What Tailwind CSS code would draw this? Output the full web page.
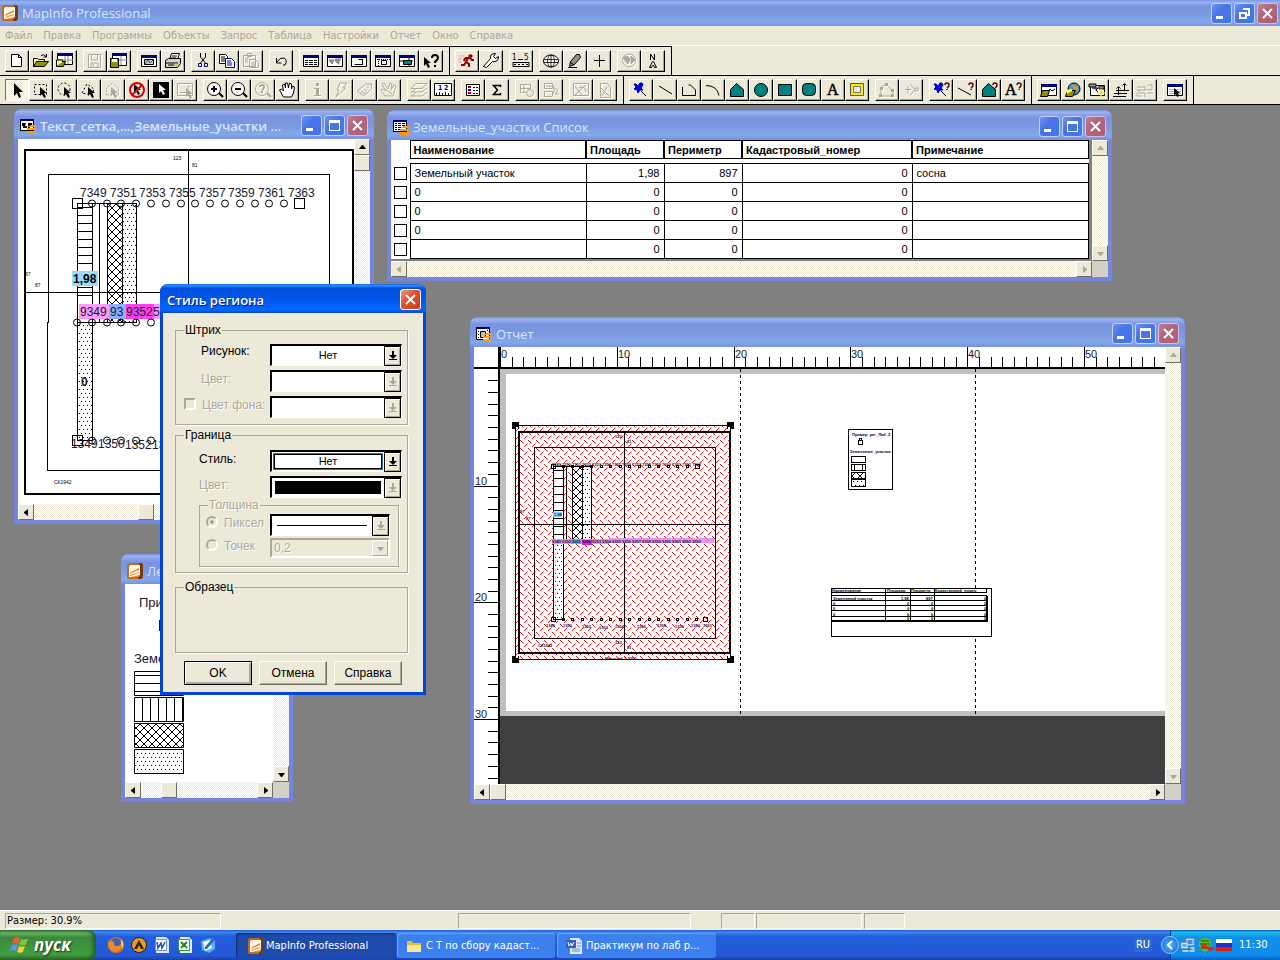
<!DOCTYPE html>
<html lang="ru">
<head>
    <meta charset="UTF-8">
    <meta name="viewport" content="width=device-width, initial-scale=1.0">
    <title>MapInfo Professional</title>
    <script src="https://cdn.jsdelivr.net/npm/@tailwindcss/browser@4"></script>
</head>
<body class="h-screen flex flex-col overflow-hidden bg-[#808080] text-black text-[11px] leading-[14px] font-['DejaVu_Sans_Condensed','DejaVu_Sans',sans-serif]">

    <!-- shared symbols and fill patterns -->
    <svg class="absolute w-0 h-0" aria-hidden="true">
        <defs>
            <symbol id="logo" viewBox="0 0 16 16">
                <path d="M3 0h11q2 0 2 2v11q0 3-3 3H2q-2 0-2-2V3q0-3 3-3z" fill="#c4691c"/>
                <path d="M12 0h2q2 0 2 2v11q0 3-3 3h-2z" fill="#7a3a10"/>
                <path d="M4 2h9v8q0 4-3 4H2V4q0-2 2-2z" fill="#fff8ee"/>
                <path d="M4 9l8-4v2l-9 4zM3 12l9-3v1l-9 3zM4 14l8-2v2z" fill="#ee8a2c"/>
            </symbol>
            <symbol id="stripes" viewBox="0 0 16 16">
                <path d="M9 8l2-1h5v2H8zM7 10h9v2H7zM7 13h9v3H7z" fill="#ff9a10"/>
            </symbol>
            <pattern id="hlines" width="8" height="8" patternUnits="userSpaceOnUse"><path d="M0 3.500h8" stroke="#000"/></pattern>
            <pattern id="vlines" width="8" height="8" patternUnits="userSpaceOnUse"><path d="M6.500 0v8" stroke="#000"/></pattern>
            <pattern id="cross" width="8" height="8" patternUnits="userSpaceOnUse"><path d="M0 0l8 8M8 0l-8 8" stroke="#000"/></pattern>
            <pattern id="dots" width="4" height="8" patternUnits="userSpaceOnUse"><path d="M1 1h1v1h-1zM3 5h1v1h-1z"/></pattern>
            <pattern id="weave" width="8" height="8" patternUnits="userSpaceOnUse">
                <path d="M0 0h1v1h-1zM1 1h1v1h-1zM2 2h1v1h-1zM4 6h1v1h-1zM5 5h1v1h-1zM6 4h1v1h-1z" fill="#d81818"/>
                <path d="M3 3h1v1h-1zM7 3h1v1h-1z" fill="#40e0e0"/>
            </pattern>
        </defs>
    </svg>

    <header class="bg-[#ece9d8]">
        <div class="h-[26px] flex items-center gap-1 pl-[2px] pr-[2px] bg-[linear-gradient(#7697e7_0,#9ab2f2_8%,#7a94df_25%,#7b96e0_50%,#83a8ea_85%,#7b8ee0_100%)]">
            <svg class="w-4 h-4"><use href="#logo"/></svg>
            <h1 class="flex-1 text-[13px] font-medium text-[#d8e4f8] font-['Open_Sans',sans-serif]">MapInfo Professional</h1>
            <div data-controls="restore" class="flex gap-[2px]"></div>
        </div>
        <nav id="menu" class="h-[20px] flex items-center gap-[11px] pl-[5px] text-[#aca899] border-b border-white"></nav>
        <div id="row1" class="flex w-max border-t border-r border-black"></div>
        <div class="border-y border-black"><div id="row2" class="flex w-max border-r border-black"></div></div>
    </header>

    <main class="relative flex-1 overflow-hidden">

        <!-- map -->
        <section class="absolute left-[14px] top-[4px] w-[360px] h-[415px] flex flex-col rounded-t-lg border-x-4 border-b-4 border-[#7385dd] bg-[#7b8ee0]">
            <div class="-mx-1 h-[30px] shrink-0 flex items-center gap-1 pl-[6px] pr-[6px] pt-[3px] rounded-t-lg bg-[linear-gradient(#7697e7_0,#9ab2f2_8%,#7a94df_25%,#7b96e0_50%,#83a8ea_85%,#7b8ee0_100%)]">
                <svg class="w-4 h-4"><path d="M0 1h14v12H0z"/><path d="M1 3h12v9H1z" fill="#fff"/><path d="M0 1h14v2H0z" fill="#000080"/><path d="M2 5h4l-1 3h2v2H3V8H2zM8 5h4v2l-2 1v2H8z"/><use href="#stripes"/></svg>
                <h2 class="flex-1 text-[13px] font-semibold text-[#d8e4f8] font-['Open_Sans',sans-serif] whitespace-nowrap">Текст_сетка,...,Земельные_участки ...</h2>
                <div data-controls="max" class="flex gap-[2px]"></div>
            </div>
            <div class="flex-1 grid grid-cols-[1fr_16px] grid-rows-[1fr_16px] min-h-0">
                <svg id="map" viewBox="18 139 336 365" class="w-full h-full bg-white font-['Liberation_Sans',sans-serif]" font-size="12">
                    <g fill="none" stroke="#000" shape-rendering="crispEdges">
                        <path d="M24 150h329v344H25V150" stroke-width="2"/>
                        <path d="M48.500 174.500h281v296h-282v-148h1zM188.500 150v344M25 292.500h328"/>
                        <path d="M77.500 203.500h59v119h-59zM92.500 203v119M99.500 203v119M107.500 203v119M122.500 203v119M77.500 322.500v118h15v-118"/>
                        <path d="M77.500 207.500h15M77.500 215.500h15M77.500 223.500h15M77.500 231.500h15M77.500 239.500h15M77.500 247.500h15M77.500 255.500h15M77.500 263.500h15M77.500 287.500h15M77.500 295.500h15"/>
                        <path d="M72.500 198.500h10v10h-10zM294.500 198.500h10v10h-10zM72.500 435.500h10v10h-10z"/>
                    </g>
                    <path d="M107 204h15v118h-15z" fill="url(#cross)"/>
                    <path d="M122 204h15v118h-15zM78 323h14v118H78z" fill="url(#dots)"/>
                    <path d="M72 271h26v15H72z" fill="#99dcff"/>
                    <path d="M79 304h82v15H79z" fill="#ff99ff"/>
                    <path d="M109 304h17v15h-17z" fill="#8cb0ff"/>
                    <path d="M126 304h28v15h-28z" fill="#ff40f0"/>
                    <g id="mapRings" fill="none" stroke="#000"></g>
                    <text x="73" y="283" font-weight="bold">1,98</text>
                    <g fill="#1a1a2e">
                        <text x="80" y="197">7349</text><text x="110" y="197">7351</text><text x="139" y="197">7353</text><text x="169" y="197">7355</text>
                        <text x="199" y="197">7357</text><text x="228" y="197">7359</text><text x="258" y="197">7361</text><text x="288" y="197">7363</text>
                        <text x="80" y="316">9349</text><text x="110" y="316">93</text><text x="126" y="316">9352</text><text x="153" y="316">5</text>
                        <text x="81" y="386" font-weight="bold">0</text>
                        <text x="71" y="448">1349</text><text x="98" y="448">1350</text><text x="125" y="449">1352</text><text x="152" y="449">13</text>
                    </g>
                    <g font-size="5"><text x="173" y="160">123</text><text x="192" y="167">81</text><text x="25" y="276">87</text><text x="35" y="287">87</text><text x="54" y="484">СК1942</text></g>
                </svg>
                <div class="flex flex-col bg-[repeating-conic-gradient(#fff_0_25%,#ece9d8_0_50%)] bg-[length:2px_2px]">
                    <button data-arrow="up"></button><button data-arrow="thumb"></button>
                </div>
                <div class="flex bg-[repeating-conic-gradient(#fff_0_25%,#ece9d8_0_50%)] bg-[length:2px_2px]">
                    <button data-arrow="left"></button><span class="w-[104px]"></span><button data-arrow="thumb"></button>
                </div>
                <div class="bg-[#d4d0c8]"></div>
            </div>
        </section>

        <!-- table browser -->
        <section class="absolute left-[387px] top-[5px] w-[725px] h-[171px] flex flex-col rounded-t-lg border-x-4 border-b-4 border-[#7385dd] bg-[#7b8ee0]">
            <div class="-mx-1 h-[30px] shrink-0 flex items-center gap-1 pl-[6px] pr-[6px] pt-[3px] rounded-t-lg bg-[linear-gradient(#7697e7_0,#9ab2f2_8%,#7a94df_25%,#7b96e0_50%,#83a8ea_85%,#7b8ee0_100%)]">
                <svg class="w-4 h-4"><path d="M0 1h14v12H0z"/><path d="M1 3h12v9H1z" fill="#fff"/><path d="M0 1h14v2H0z" fill="#000080"/><path d="M2 4.500h2M5 4.500h3M9 4.500h3M2 6.500h2M5 6.500h3M9 6.500h3M2 8.500h2M5 8.500h3M9 8.500h3M2 10.500h2M5 10.500h3" stroke="#000"/><use href="#stripes"/></svg>
                <h2 class="flex-1 text-[13px] font-medium text-[#d8e4f8] font-['Open_Sans',sans-serif] whitespace-nowrap">Земельные_участки Список</h2>
                <div data-controls="max" class="flex gap-[2px]"></div>
            </div>
            <div class="flex-1 grid grid-cols-[1fr_16px] grid-rows-[1fr_16px] min-h-0">
                <div class="bg-[#808080] pr-[3px] pb-[2px] overflow-hidden font-['Liberation_Sans',sans-serif]">
                    <table class="w-full table-fixed border-collapse bg-white">
                        <colgroup><col class="w-[19px]"><col class="w-[176px]"><col class="w-[78px]"><col class="w-[78px]"><col class="w-[170px]"><col></colgroup>
                        <thead>
                            <tr class="h-[18px] text-left">
                                <td></td>
                                <th class="border border-r-2 border-black px-[3px]">Наименование</th>
                                <th class="border border-r-2 border-black px-[3px]">Площадь</th>
                                <th class="border border-r-2 border-black px-[3px]">Периметр</th>
                                <th class="border border-r-2 border-black px-[3px]">Кадастровый_номер</th>
                                <th class="border border-black px-[3px]">Примечание</th>
                            </tr>
                            <tr class="h-[5px]"></tr>
                        </thead>
                        <tbody id="plots"></tbody>
                    </table>
                </div>
                <div class="flex flex-col justify-between bg-[repeating-conic-gradient(#fff_0_25%,#ece9d8_0_50%)] bg-[length:2px_2px]">
                    <button data-arrow="up" disabled></button><button data-arrow="down" disabled></button>
                </div>
                <div class="flex justify-between bg-[repeating-conic-gradient(#fff_0_25%,#ece9d8_0_50%)] bg-[length:2px_2px]">
                    <button data-arrow="left" disabled></button><button data-arrow="right" disabled></button>
                </div>
                <div class="bg-[#d4d0c8]"></div>
            </div>
        </section>

        <!-- layout -->
        <section class="absolute left-[470px] top-[212px] w-[715px] h-[487px] flex flex-col rounded-t-lg border-x-4 border-b-4 border-[#7385dd] bg-[#7b8ee0]">
            <div class="-mx-1 h-[30px] shrink-0 flex items-center gap-1 pl-[6px] pr-[6px] pt-[3px] rounded-t-lg bg-[linear-gradient(#7697e7_0,#9ab2f2_8%,#7a94df_25%,#7b96e0_50%,#83a8ea_85%,#7b8ee0_100%)]">
                <svg class="w-4 h-4"><path d="M0 1h14v13H0z"/><path d="M1 3h12v10H1z" fill="#fff"/><path d="M0 1h14v2H0z" fill="#000080"/><path d="M4.500 5.500h5v6h-5z" fill="#c0c0c0" stroke="#000"/><path d="M2 5h1v1H2zM2 8h1v1H2zM2 11h1v1H2zM11 4h1v1h-1z"/><use href="#stripes"/></svg>
                <h2 class="flex-1 text-[13px] font-medium text-[#d8e4f8] font-['Open_Sans',sans-serif]">Отчет</h2>
                <div data-controls="max" class="flex gap-[2px]"></div>
            </div>
            <div class="flex-1 grid grid-cols-[1fr_16px] grid-rows-[1fr_16px] min-h-0">
                <svg viewBox="474 347 691 437" class="w-full h-full bg-white font-['Liberation_Sans',sans-serif]">
                    <path d="M500 369h665v347H500z" fill="#c0c0c0"/>
                    <path d="M506 374h659v337H506z" fill="#fff"/>
                    <path d="M500 716h665v68H500z" fill="#404040"/>
                    <path d="M498 347h2v437h-2zM474 367h691v2H474z"/>
                    <g id="ruler" stroke="#000" shape-rendering="crispEdges"></g>
                    <g id="rulerText" font-size="11" fill="#1a1a2e"></g>
                    <path d="M740.500 369v346M975.500 369v346" stroke="#000" stroke-dasharray="3 3" shape-rendering="crispEdges"/>

                    <path d="M515 425h216v235H515z" fill="#fff"/>
                    <path d="M515 425h216v235H515z" fill="url(#weave)" shape-rendering="crispEdges"/>
                    <path d="M553 466h11v155h-11zM572 466h19v76h-19z" fill="#fff"/>
                    <path d="M553 543h11v76h-11zM582 466h9v76h-9z" fill="url(#dots)"/>
                    <path d="M572 466h10v76h-10z" fill="url(#cross)"/>
                    <g fill="none" stroke="#000" shape-rendering="crispEdges">
                        <path d="M515.500 425.500h215v234h-215zM534.500 447.500h181v191h-181zM624.500 432v221M519 524.500h211"/>
                        <path d="M519 432h211v221H519z" stroke-width="2"/>
                        <path d="M553.500 466.500h38v76h-38zM563.500 466v76M566.500 466v76M572.500 466v76M582.500 466v76M553.500 542.500v77h10v-77"/>
                        <path d="M553.500 470.500h10M553.500 478.500h10M553.500 486.500h10M553.500 494.500h10M553.500 502.500h10M553.500 510.500h10M553.500 518.500h10M553.500 526.500h10M553.500 534.500h10"/>
                        <path d="M551.500 464.500h4v4h-4zM695.500 464.500h4v4h-4zM551.500 617.500h4v4h-4zM703.500 617.500h4v4h-4z"/>
                        <g id="layoutMarks"></g>
                    </g>
                    <path d="M553 512h9v5h-9z" fill="#8cd0ff"/>
                    <path d="M552 539h57v5h-57zM609 538h105v5H609z" fill="#ee90f0"/>
                    <path d="M571 539h10v5h-10z" fill="#7ca4e8"/><path d="M582 540h10v5h-10z" fill="#e020d8"/>
                    <g font-size="4" font-weight="bold" fill="#101030">
                        <text x="552" y="466">7349 7350 7351 7352 7353 7354 7355 7356 7357 7358 7359 7360 7361 7362 7363</text>
                        <text x="552" y="543">9349 9350 9351 9352 9353 9354 9355 9356 9357 9358 9359 9360 9361 9362 9363</text>
                        <text x="554" y="516">1,98</text>
                        <text x="546" y="627">1349</text><text x="563" y="627">1350</text><text x="582" y="628">1352</text><text x="599" y="629">1353</text><text x="615" y="628">1354</text><text x="637" y="628">1356</text><text x="657" y="627">1358</text><text x="675" y="628">1359</text><text x="691" y="627">1360</text><text x="703" y="627">1361</text>
                        <text x="615" y="438">123</text><text x="627" y="443">81</text><text x="520" y="513">87</text><text x="526" y="520">87</text><text x="615" y="644">123</text><text x="627" y="649">81</text><text x="538" y="647">СК1942</text><text x="605" y="660">Масштаб 1:2000</text>
                    </g>
                    <path d="M512 422h7v3h-4v4h-3zM734 422h-7v3h4v4h3zM512 663h7v-3h-4v-4h-3zM734 663h-7v-3h4v-4h3z"/>
                    <path d="M515 425h4v4h-4zM727 425h4v4h-4zM515 656h4v4h-4zM727 656h4v4h-4z"/>
                    <path d="M516 427h2v2h-2zM728 427h2v2h-2zM516 656h2v2h-2zM728 656h2v2h-2z" fill="#fff"/>

                    <path d="M848.500 429.500h44v60h-44z" fill="#fff" stroke="#000" shape-rendering="crispEdges"/>
                    <g font-size="4" font-weight="bold" fill="#000040"><text x="852" y="436">Пример_рег_Лаб_2</text><text x="850" y="453">Земельные_участки</text></g>
                    <path d="M858.500 440.500h4v4h-4zM859.500 438.500h2v2h-2z" fill="none" stroke="#000" shape-rendering="crispEdges"/>
                    <path d="M851 472h14v7h-14z" fill="url(#cross)"/><path d="M851 480h14v7h-14z" fill="url(#dots)"/>
                    <path d="M851.500 456.500h14v6h-14zM851.500 464.500h14v6h-14zM851.500 472.500h14v6h-14zM851.500 479.500h14v7h-14zM854.500 465v5M862.500 465v5" fill="none" stroke="#000" shape-rendering="crispEdges"/>

                    <path d="M831.500 588.500h160v48h-160z" fill="#fff" stroke="#000" shape-rendering="crispEdges"/>
                    <path d="M831.500 592.500h155v-4M831.500 595.500h155v25M885.500 588v33M910.500 588v33M934.500 588v33M831 600.500h156M831 605.500h156M831 610.500h156M831 616.500h156M831 620.500h156M831 621.500h156M987.500 596v26" fill="none" stroke="#000" shape-rendering="crispEdges"/>
                    <g font-size="4" font-weight="bold"><text x="832" y="592">Наименование</text><text x="887" y="592">Площадь</text><text x="911" y="592">Периметр</text><text x="935" y="592">Кадастровый_номер</text>
                        <text x="833" y="600">Земельный участок</text><text x="901" y="600">1,98</text><text x="926" y="600">897</text><text x="984" y="600">0</text>
                        <text x="833" y="605">0</text><text x="907" y="605">0</text><text x="931" y="605">0</text><text x="984" y="605">0</text>
                        <text x="833" y="610">0</text><text x="907" y="610">0</text><text x="931" y="610">0</text><text x="984" y="610">0</text>
                        <text x="833" y="616">0</text><text x="907" y="616">0</text><text x="931" y="616">0</text><text x="984" y="616">0</text>
                        <text x="907" y="620">0</text><text x="931" y="620">0</text><text x="984" y="620">0</text></g>
                </svg>
                <div class="flex flex-col justify-between bg-[repeating-conic-gradient(#fff_0_25%,#ece9d8_0_50%)] bg-[length:2px_2px]">
                    <button data-arrow="up" disabled></button><button data-arrow="down" disabled></button>
                </div>
                <div class="flex bg-[repeating-conic-gradient(#fff_0_25%,#ece9d8_0_50%)] bg-[length:2px_2px]">
                    <button data-arrow="left"></button><button data-arrow="thumb"></button><span class="flex-1"></span><button data-arrow="right"></button>
                </div>
                <div class="bg-[#d4d0c8]"></div>
            </div>
        </section>

        <!-- legend -->
        <section class="absolute left-[121px] top-[449px] w-[172px] h-[248px] flex flex-col rounded-t-lg border-x-4 border-b-4 border-[#7385dd] bg-[#7b8ee0]">
            <div class="-mx-1 h-[30px] shrink-0 flex items-center gap-1 pl-[6px] pr-[6px] pt-[3px] rounded-t-lg bg-[linear-gradient(#7697e7_0,#9ab2f2_8%,#7a94df_25%,#7b96e0_50%,#83a8ea_85%,#7b8ee0_100%)]">
                <svg class="w-4 h-4"><use href="#logo"/></svg>
                <h2 class="flex-1 text-[13px] font-medium text-[#d8e4f8] font-['Open_Sans',sans-serif]">Легенда</h2>
                <div data-controls="max" class="flex gap-[2px]"></div>
            </div>
            <div class="flex-1 grid grid-cols-[1fr_16px] grid-rows-[1fr_16px] min-h-0">
                <svg viewBox="125 584 148 198" class="w-full h-full bg-white font-['Liberation_Sans',sans-serif]" font-size="13" fill="#1a1a2e">
                    <text x="139" y="607">Пример</text><text x="134" y="663">Земельные</text>
                    <path d="M159 620h10v11h-10z"/>
                    <path d="M134 672h50v24h-50z" fill="url(#hlines)"/><path d="M134 698h50v24h-50z" fill="url(#vlines)"/><path d="M134 724h50v24h-50z" fill="url(#cross)"/><path d="M134 750h50v24h-50z" fill="url(#dots)"/>
                    <path d="M134.500 671.500h49v24h-49zM134.500 697.500h49v24h-49zM134.500 723.500h49v24h-49zM134.500 749.500h49v24h-49z" fill="none" stroke="#000"/>
                </svg>
                <div class="flex flex-col justify-between bg-[repeating-conic-gradient(#fff_0_25%,#ece9d8_0_50%)] bg-[length:2px_2px]">
                    <button data-arrow="up"></button><button data-arrow="down"></button>
                </div>
                <div class="flex bg-[repeating-conic-gradient(#fff_0_25%,#ece9d8_0_50%)] bg-[length:2px_2px]">
                    <button data-arrow="left"></button><span class="w-5"></span><button data-arrow="thumb"></button><span class="flex-1"></span><button data-arrow="right"></button>
                </div>
                <div class="bg-[#d4d0c8]"></div>
            </div>
        </section>

        <!-- region style dialog -->
        <form onsubmit="return false" class="absolute left-[160px] top-[179px] w-[266px] h-[411px] flex flex-col rounded-t-lg border-x-3 border-b-3 border-[#0046dd] bg-[#ece9d8] text-[12px] font-['Liberation_Sans',sans-serif]">
            <div class="-mx-[3px] h-[29px] shrink-0 flex items-center pl-[7px] pr-[5px] pt-[2px] rounded-t-lg bg-[linear-gradient(#0058ee_0,#3593ff_4%,#0050e0_15%,#0055e8_50%,#0066ff_85%,#0060f4_93%,#0044c0_100%)]">
                <h2 class="flex-1 text-[13px] font-semibold text-white font-['Open_Sans',sans-serif] [text-shadow:1px_1px_#0a1883]">Стиль региона</h2>
                <button type="button" aria-label="Закрыть" class="w-[21px] h-[21px] rounded-[3px] border border-white bg-[linear-gradient(135deg,#f0a088,#e0552c_40%,#c83c14)]"><svg class="w-[19px] h-[19px]"><path d="M5 5l9 9M14 5l-9 9" stroke="#fff" stroke-width="2"/></svg></button>
            </div>
            <div class="flex flex-col px-3 pt-[10px]">
                <fieldset class="min-w-0 h-[102px] w-[233px] border border-[#aca899] shadow-[1px_1px_#fff] pl-2 pb-1">
                    <legend class="px-[1px] h-[14px]">Штрих</legend>
                    <div class="flex flex-col gap-1 pt-[7px]">
                        <div class="flex h-[22px]"><label for="fillPattern" class="w-[86px] pl-[17px]">Рисунок:</label><span data-combo="fillPattern" data-value="Нет"></span></div>
                        <div class="flex h-[22px]"><label for="fillColor" class="w-[86px] pl-[17px] pt-[2px] text-[#aca899] [text-shadow:1px_1px_#fff]">Цвет:</label><span data-combo="fillColor" data-off="1"></span></div>
                        <div class="flex h-[22px]"><span class="w-[86px] flex items-start gap-[6px] pt-[2px]"><input id="useBack" type="checkbox" disabled class="appearance-none w-3 h-3 border-2 border-[#aca899] border-r-white border-b-white"><label for="useBack" class="whitespace-nowrap text-[#aca899] [text-shadow:1px_1px_#fff]">Цвет фона:</label></span><span data-combo="backColor" data-off="1"></span></div>
                    </div>
                </fieldset>
                <fieldset class="min-w-0 mt-[3px] h-[145px] w-[233px] border border-[#aca899] shadow-[1px_1px_#fff] pl-2">
                    <legend class="px-[1px] h-[14px]">Граница</legend>
                    <div class="flex flex-col gap-1 pt-2">
                        <div class="flex h-[22px]"><label for="lineStyle" class="w-[86px] pl-[15px] pt-[2px]">Стиль:</label><span data-combo="lineStyle" data-value="Нет" data-look="focus"></span></div>
                        <div class="flex h-[22px]"><label for="lineColor" class="w-[86px] pl-[15px] pt-[2px] text-[#aca899] [text-shadow:1px_1px_#fff]">Цвет:</label><span data-combo="lineColor" data-off="1" data-look="black"></span></div>
                    </div>
                    <fieldset class="min-w-0 ml-[15px] h-[69px] w-[200px] border border-[#aca899] shadow-[1px_1px_#fff] pl-1 text-[#aca899]">
                        <legend class="ml-1 px-[1px] h-[14px] [text-shadow:1px_1px_#fff]">Толщина</legend>
                        <div class="flex h-[25px] pt-[2px]"><span class="w-[66px] flex items-start gap-[6px] pl-[2px] pt-[2px]"><input id="px" name="unit" type="radio" checked disabled class="appearance-none w-3 h-3 rounded-full border-2 border-[#aca899] border-r-white border-b-white bg-[radial-gradient(#aca899_0_2px,transparent_2px)]"><label for="px" class="[text-shadow:1px_1px_#fff]">Пиксел</label></span><span data-combo="lineWidth" data-off="1" data-look="line"></span></div>
                        <div class="flex h-[20px] pt-[1px]"><span class="w-[66px] flex items-start gap-[6px] pl-[2px] pt-[1px]"><input id="pt" name="unit" type="radio" disabled class="appearance-none w-3 h-3 rounded-full border-2 border-[#aca899] border-r-white border-b-white"><label for="pt" class="[text-shadow:1px_1px_#fff]">Точек</label></span>
                            <span class="flex w-[120px] h-[20px] border-2 border-[#aca899] border-r-white border-b-white"><select aria-label="Толщина в точках" disabled class="appearance-none flex-1 min-w-0 px-[2px] opacity-100 [text-shadow:1px_1px_#fff]"><option>0,2</option></select><svg class="w-4 h-4 border border-white border-r-[#aca899] border-b-[#aca899]"><path d="M4 6h7l-3 4h-1z" fill="#aca899"/></svg></span></div>
                    </fieldset>
                </fieldset>
                <fieldset class="min-w-0 mt-[7px] h-[73px] w-[233px] border border-[#aca899] shadow-[1px_1px_#fff] pl-2"><legend class="px-[1px] h-[14px]">Образец</legend></fieldset>
                <div class="flex gap-[7px] pl-[9px] pt-2">
                    <button type="submit" class="w-[68px] h-6 border border-black shadow-[inset_1px_1px_#fff,inset_-2px_-2px_#aca899]">OK</button>
                    <button type="button" class="w-[68px] h-6 border border-white border-r-[#716f64] border-b-[#716f64] shadow-[inset_-1px_-1px_#aca899]">Отмена</button>
                    <button type="button" class="w-[68px] h-6 border border-white border-r-[#716f64] border-b-[#716f64] shadow-[inset_-1px_-1px_#aca899]">Справка</button>
                </div>
            </div>
        </form>
    </main>

    <footer>
        <div class="h-[20px] flex pt-[2px] pl-[5px] pb-px border-t border-white bg-[#ece9d8]">
            <span class="w-[216px] pl-px border border-[#aca899] border-r-white border-b-white">Размер: 30.9%</span>
            <span class="ml-[237px] w-[233px] border border-[#aca899] border-r-white border-b-white"></span>
            <span class="ml-[30px] w-[34px] border border-[#aca899] border-r-white border-b-white"></span>
            <span class="ml-[1px] w-[106px] border border-[#aca899] border-r-white border-b-white"></span>
            <span class="ml-[2px] w-[41px] border border-[#aca899] border-r-white border-b-white"></span>
        </div>
        <div class="h-[30px] flex items-stretch text-white bg-[linear-gradient(#1f5ed6_0,#3f87ea_8%,#245edb_20%,#2259d8_85%,#1941a5_100%)]">
            <button class="w-24 flex items-center gap-1 pl-[10px] rounded-r-lg bg-[linear-gradient(#388238,#6cb464_10%,#3c873c_25%,#42a040_80%,#2d6d2d)] shadow-[inset_-3px_0_4px_#205c20]">
                <svg class="w-5 h-5" viewBox="0 0 20 20"><path d="M4 3q3-2 6 0l-2 6q-3-1.500-6 0z" fill="#f0602c"/><path d="M11 4q3 1.500 7-.500l-2 6q-4 2-7 0z" fill="#7cc83c"/><path d="M2 10q3-1.500 6 0l-2 6q-3-1.500-6 0z" fill="#5c94f0"/><path d="M9 11q3 1.500 6 0l-2 6q-3 1.500-6 0z" fill="#fccc30"/></svg>
                <span class="text-[17px] font-bold italic font-['Open_Sans',sans-serif] [text-shadow:1px_1px_2px_#103010]">пуск</span>
            </button>
            <div class="flex items-center gap-[7px] w-[140px] pl-3">
                <a href="#" aria-label="Firefox"><svg class="w-4 h-4" viewBox="0 0 16 16"><circle cx="8" cy="8" r="8" fill="#e8691c"/><circle cx="8" cy="6" r="5" fill="#3c64b4"/><path d="M0 4q2 1 4 0 3 1 2 4 3 3 7-1 0 8-6 8Q-1 12 0 4z" fill="#f08a24"/><path d="M13 2q4 5 1 10-1-5-1-10z" fill="#fcd848"/></svg></a>
                <a href="#" aria-label="AIMP"><svg class="w-4 h-4" viewBox="0 0 16 16"><circle cx="8" cy="8" r="7.500" fill="#f09c10" stroke="#222"/><path d="M3 12l5-9 5 9h-3l-2-4-2 4z" fill="#222"/></svg></a>
                <a href="#" aria-label="Word"><svg class="w-4 h-4" viewBox="0 0 16 16"><path d="M2 0h10l3 3v13H2z" fill="#dce8fc"/><path d="M1.500 2.500h11v11h-11z" fill="#f8fbff" stroke="#6c90d8"/><path d="M3 5l1 6 3-5 1 5 3-6" fill="none" stroke="#2450a8" stroke-width="1.500"/></svg></a>
                <a href="#" aria-label="Excel"><svg class="w-4 h-4" viewBox="0 0 16 16"><path d="M3 0h9l3 3v13H3z" fill="#dcf0dc"/><path d="M1.500 2.500h11v11h-11z" fill="#f8fff8" stroke="#3c9440"/><path d="M4 5l6 6M10 5l-6 6" fill="none" stroke="#208030" stroke-width="2"/></svg></a>
                <a href="#" aria-label="Свернуть все окна"><svg class="w-4 h-4" viewBox="0 0 16 16"><path d="M1 4l9-3 5 3v8l-6 4-7-3z" fill="#58b0e8"/><path d="M3 5l7-2 2 8-7 3z" fill="#fff"/><path d="M5 10l7-8 2 2-7 8H5z" fill="#2868b8"/></svg></a>
            </div>
            <button class="w-[160px] mt-[3px] mb-[2px] flex items-center gap-[2px] pl-3 rounded-[3px] bg-[#1e4aab] shadow-[inset_1px_1px_2px_#0c2a74]"><svg class="w-4 h-4"><use href="#logo"/></svg>MapInfo Professional</button>
            <button class="ml-px w-[158px] mt-[3px] mb-[2px] flex items-center gap-1 pl-[9px] rounded-[3px] bg-[#3c80f0] shadow-[inset_1px_1px_1px_#6ca4fc]"><svg class="w-4 h-4"><path d="M1 3h5l1 2h8v9H1z" fill="#e8b83c"/><path d="M1 7h14v7H1z" fill="#fce890"/></svg>С Т по сбору кадаст...</button>
            <button class="ml-[2px] w-[159px] mt-[3px] mb-[2px] flex items-center gap-1 pl-[9px] rounded-[3px] bg-[#3c80f0] shadow-[inset_1px_1px_1px_#6ca4fc]"><svg class="w-4 h-4" viewBox="0 0 16 16"><path d="M4 0h9l3 3v13H4z" fill="#dce8fc"/><path d="M6 11h8M6 13h8M11 5h4M11 8h4" stroke="#6c8cc8"/><path d="M0 2h10v8H0z" fill="#3460b8"/><path d="M2 4l1 4 2-3 1 3 2-4" fill="none" stroke="#fff"/></svg>Практикум по лаб р...</button>
            <span class="ml-auto self-center px-[2px] text-center bg-[#2f69cc]">RU</span>
            <div class="ml-[18px] w-[110px] flex items-center border-l border-[#0c3c94] bg-[linear-gradient(#0c59b9,#18b9f3_8%,#1290e8_25%,#0d8dea_85%,#095bc9)]">
                <button aria-label="Показать значки" class="-ml-[10px] w-[18px] h-[18px] rounded-full border border-[#8cc8fc] bg-[radial-gradient(#50b4fc,#1464d0)]"><svg class="w-4 h-4"><path d="M10 4l-4 4 4 4" fill="none" stroke="#fff" stroke-width="2"/></svg></button>
                <svg class="w-[17px] h-4" viewBox="0 0 16 16"><path d="M6.500 1.500h8v7h-8z" fill="#c8d8ec" stroke="#8098b8"/><path d="M8 3h5v4H8z" fill="#3c8cf0"/><path d="M1.500 5.500h7v6h-7z" fill="#dce8f8" stroke="#8098b8"/><path d="M3 7h4v3H3z" fill="#58b0fc"/><path d="M3 14h6M11 11h3v3h-4" stroke="#b8c8dc" fill="none" stroke-width="2"/></svg>
                <svg class="ml-[2px] w-4 h-4" viewBox="0 0 16 16"><path d="M7 1q7 0 6 6 0 5-6 8-6-3-6-8 0-6 6-6z" fill="#58c028"/><path d="M3 4h8M2 7h10M4 11h6" stroke="#1c5010"/><path d="M3 8h3v-2l4 4 2-2v2h4v3h-3v2l-5-4-5 1z" fill="#e82020"/></svg>
                <svg class="ml-[2px] w-4 h-3"><path d="M0 0h16v4H0z" fill="#fff"/><path d="M0 4h16v4H0z" fill="#2030c8"/><path d="M0 8h16v4H0z" fill="#d82018"/></svg>
                <time class="ml-[7px]">11:30</time>
            </div>
        </div>
    </footer>

    <script>
        const byId = id => document.getElementById(id)

        byId('menu').innerHTML = ['Файл', 'Правка', 'Программы', 'Объекты', 'Запрос', 'Таблица', 'Настройки', 'Отчет', 'Окно', 'Справка']
            .map(name => `<a href="#">${name}</a>`).join('')

        // window with a navy caption, base for many toolbar icons
        const win = (inner) => `<path d="M2.5 3.5h15v11h-15z" fill="#fff"/><path d="M2 3h16v3H2z" fill="#000080" stroke="none"/>${inner}`
        const arrow = (x, y) => `<path d="M${x} ${y}v9l2-2 2 4 2-1-2-4h3z" fill="currentColor" stroke="none"/>`
        const quest = (x, y) => `<path d="M${x} ${y - 5}q0-2 2-2t2 2-2 3M${x + 2} ${y - 1}v1" stroke="#600000" stroke-width="1.500"/>`
        const pin = '<path d="M3 3h2l2 2 2-3h2l1 2-2 3 2 2h-3l-2 3-1-3-3-1 2-2z" fill="#0000e0" stroke="#0000c0"/><path d="M10 10l5 5"/>'
        const house = '<path d="M3.500 15.500V8.500l6-6 7 6v7z" fill="#008080"/>'
        const letterA = x => `<text x="${x}" y="14" font-size="16" fill="#000" stroke="#000" stroke-width=".5" font-family="Liberation Serif">A</text>`

        const icons = {
            file: '<path d="M4.500 2.500h7l3 3v9h-10z" fill="#fff"/><path d="M11.500 2.500v3h3"/>',
            open: '<path d="M2.500 14.500v-8h4l1 1h6v2"/><path d="M3 14V7h3l1 1h6v2H6z" fill="#ffff80" stroke="none"/><path d="M2.500 14.500l3-5h12l-4 5z" fill="#909000"/><path d="M10 3.500q3-2 5 1M15.500 2v3h-3"/>',
            openws: '<path d="M2.500 1.500h15v11h-15z" fill="#fff"/><path d="M2 1h16v3H2z" fill="#000080" stroke="none"/><path d="M10 4v8M2 8h16M13 4v8" stroke="#888"/><path d="M1.500 14.500l2-5h7l-2 5z" fill="#909000"/><path d="M1.500 14V8h6v2" fill="#ffff80"/>',
            save: '<path d="M3.500 2.500h12v13h-12z"/><path d="M6.500 3v5h6V3M6 15v-4h7v4M8 12v3"/>',
            savews: '<path d="M3.500 1.500h14v12h-14z" fill="#fff"/><path d="M3 1h15v3H3z" fill="#000080" stroke="none"/><path d="M12 4v9M10 8h8" stroke="#888"/><path d="M1.500 6.500h8v9h-8z" fill="#909000"/><path d="M3 7h5v3H3z" fill="#fff" stroke="none"/>',
            wmap: win('<path d="M5.500 7.500h9v5h-9z" fill="#b8c8d0"/><path d="M6 12l3-4 2 3 3-3" stroke="#555"/>'),
            print: '<path d="M6.500 7.500l2-6h8l-2 6" fill="#fff"/><path d="M2.500 8.500l3-2h12v5l-3 4h-12z" fill="#d0d0c8"/><path d="M2 11h13M9 4h5M8 6h5M5 13h6"/><path d="M12 12h2v1h-2z" stroke="#c8c800"/>',
            cut: '<path d="M7.500 1v4l5 6M12.500 1v4l-5 6"/><path d="M5.500 11.500h3v3h-3zM11.500 11.500h3v3h-3z" stroke="#0000a0"/>',
            copy: '<path d="M2.500 2.500h6l2 2v7h-8z" fill="#fff"/><path d="M4 5h4M4 7h5M4 9h5"/><path d="M8.500 6.500h6l3 3v6h-9z" fill="#fff" stroke="#0000a0"/><path d="M10 9h4M10 11h5M10 13h5" stroke="#0000a0"/>',
            paste: '<path d="M2.500 3.500h12v11h-12zM6.500 1.500h4v3h-4zM8.500 7.500h6l3 3v5h-9zM10 11h5M10 13h5M4 6h4M4 8h3M4 10h3"/>',
            undo: '<path d="M5.500 6v5h5M6 10q3-5 7-4 4 2 1 7h-2"/>',
            browser: win('<path d="M4 8.500h3M8 8.500h4M13 8.500h3M4 10.500h3M8 10.500h4M13 10.500h3M4 12.500h3M8 12.500h4M13 12.500h3"/>'),
            mapper: win('<path d="M4 8h5l-2 4zM10 7h6l-2 2v3l-3-2z" fill="#909090" stroke="#808080"/>'),
            grapher: win('<path d="M5.500 12.500h8v-5h-4M13.500 12.500v-5"/>'),
            layout: win('<path d="M4 7.500h13M5.500 7v7" stroke-dasharray="1 1"/><path d="M8.500 8.500h5v4h-5z"/>'),
            redist: win('<path d="M3 9h13M12 6v8"/><path d="M6.500 8.500h8v4h-8z" fill="#008080"/>'),
            help: arrow(3, 5) + '<path d="M11 6q0-3 3-3t3 3q0 1-3 4v1M14 13v2" stroke-width="2"/>',
            run: '<path d="M12 3h3v2h-3z" fill="#900000" stroke="#900000"/><path d="M8 6h5l2 2h2M11 6l-2 4 3 2v3M9 10l-2 3H4M8 6L7 9" stroke="#900000" stroke-width="2"/><path d="M2 4h6M1 7h4M1 10h4" stroke="#f0a0a0"/>',
            wrench: '<path d="M2.500 14.500l7-8q-1-5 5-5l-2 3 2 2 3-2q0 6-6 5l-6 6z" fill="#fff"/>',
            scale: '<text x="1" y="8" font-size="8" fill="currentColor" stroke="none">1</text><text x="13" y="8" font-size="8" fill="currentColor" stroke="none">5</text><path d="M7 7.500h5M2 10.500h16v4H2z"/><path d="M3 12.500h15" stroke-dasharray="2 2"/>',
            globe: '<ellipse cx="10" cy="9" rx="7.500" ry="6" fill="#fff"/><g stroke-width=".8"><ellipse cx="10" cy="9" rx="3.500" ry="6"/><path d="M3 7.500h14M3 10.500h14M10 3v12"/></g>',
            pencil: '<path d="M4.500 14.500l1-5 6-7h3l1 3-6 7z" fill="#909090"/><path d="M5 10l4 3M3 15.500h9"/>',
            plus: '<path d="M10.500 3v12M5 8.500h11"/>',
            earth: '<circle cx="10" cy="8.500" r="6.500"/><path d="M4 6l4-2 3 3-2 5zM12 4l4 4-4 4z" fill="currentColor"/>',
            north: '<path d="M7.500 8V2l4 6V2M6.500 15.500l3-6 1 0 3 6h-2l-1-2h-1l-1 2z"/>',
            select: '<path d="M7 2v13l3-3 2 5 2-1-2-5h4z" fill="#000" stroke="none"/>',
            marquee: '<path d="M3.500 3.500h12v10h-12z" stroke-dasharray="2 2"/>' + arrow(9, 6),
            radius: '<circle cx="9" cy="8" r="6" stroke-dasharray="2 2"/>' + arrow(9, 6),
            poly: '<path d="M3 12l5-9 7 5-2 6z" stroke-dasharray="2 2"/>' + arrow(9, 6),
            bound: '<path d="M3.500 14V7l6-5 6 5v7z" stroke-dasharray="2 1"/>' + arrow(8, 6),
            none: arrow(7, 3) + '<circle cx="10" cy="9" r="7" stroke="#e00000" stroke-width="2"/><path d="M5 14l10-10" stroke="#e00000" stroke-width="2"/>',
            invert: '<path d="M2 1h16v16H2z" fill="#000" stroke="none"/><path d="M8 3v9l2-2 2 4 2-1-2-4h3z" fill="#fff" stroke="none"/>',
            graphsel: '<path d="M2.500 2.500h15v12h-15zM5 11.500h8v-6h2"/>' + arrow(11, 7),
            zoomin: '<circle cx="9" cy="8" r="6.500" fill="#fff"/><path d="M9 5v6M6 8h6M14 12l4 4" stroke-width="2"/>',
            zoomout: '<circle cx="9" cy="8" r="6.500" fill="#fff"/><path d="M6 8h6M14 12l4 4" stroke-width="2"/>',
            zoomq: '<circle cx="9" cy="8" r="6.500"/><path d="M14 12l4 4M7 6q0-2 2-2t2 2-2 3M9 10v2" stroke-width="2"/>',
            hand: '<path d="M6.500 16L2.500 9l2-1 2 2-1-6 2-1 1 4V2h2l1 5 1-5 2 1v5l1-3 2 1-1 6-2 4z" fill="#fff"/>',
            info: '<path d="M9 2h3v3H9zM7 7h5v7h2v1H7v-1h2V8H7z" fill="currentColor" stroke="none"/>',
            hot: '<path d="M9 2h7l-4 5h3L5 16l3-7H6z"/>',
            label: '<path d="M2.500 10l8-7h6v5l-8 7zM12 6h2M6 10l4 3M9 8l3 2"/>',
            drag: '<path d="M6 15l-4-6 2-1 3 2-4-7 2-1 4 6 2-6 2 1-1 6 3-5 2 1-3 10z"/><path d="M7 9l6 4"/>',
            layers: '<path d="M2 7.500l5-5h11l-5 5zM2 11.500l5-4M18 7l-5 4H2M2 15.500l5-4M18 11l-5 4H2"/>',
            ruler: '<path d="M1.500 2.500h17v12h-17z" fill="#fff"/><text x="5" y="9" font-size="7" font-weight="bold" fill="#000080" stroke="none">1</text><text x="11" y="9" font-size="7" font-weight="bold" fill="#000080" stroke="none">2</text><path d="M3.500 12v2M6.500 11v3M9.500 12v2M12.500 11v3M15.500 12v2"/>',
            legend: '<path d="M3.500 3.500h13v11h-13z" fill="#fff"/><path d="M5 6h3M5 12h3" stroke="#c00000" stroke-width="2"/><path d="M5 9h3" stroke="#0000c0" stroke-width="2"/><path d="M10 6.500h5M10 9.500h5M10 12.500h5" stroke-dasharray="2 1"/>',
            sum: '<path d="M13.500 6V4.500h-7l4 4.500-4 4.500h7V12" stroke-width="1.500"/>',
            seth: '<path d="M3.500 3.500h10v8h-10zM3 7.500h11M7 3v8"/><circle cx="13" cy="12" r="3.500" fill="#ece9d8"/>',
            dist: '<path d="M3.500 2.500h8v5h-8zM3.500 10.500h8v5h-8zM5 5h8v7h-2M14 8q3-1 2 3l-2 2h4"/>',
            clip: '<path d="M2.500 2.500h15v12h-15zM4 14L15 4M4 5l7 9M8 7q6-3 7 4"/>',
            clip2: '<path d="M5.500 2.500h7l3 4v10h-10zM5 6l9 9M12 6l-5 9"/>',
            pin: pin, line: '<path d="M4 5l13 8"/>', pline: '<path d="M3.500 6v8.500h13V9l-5-5h-2"/>', arc: '<path d="M3 4.500q11 0 13 10"/>',
            region: house, ellipse: '<circle cx="10" cy="9" r="6.500" fill="#008080"/>', rect: '<path d="M3.500 3.500h13v11h-13z" fill="#008080"/>',
            rrect: '<rect x="3.500" y="2.500" width="13" height="12" rx="4" fill="#008080"/>',
            text: letterA(4),
            frame: '<path d="M3.500 2.500h13v12h-13z" stroke="#555"/><path d="M5 4h10v9H5z" stroke="#f0f000" stroke-width="2"/><path d="M6.500 5.500h7v6h-7z" stroke="#777"/>',
            reshape: '<path d="M4 15V7l5-4 7 7v5z"/><path d="M2 13h3v3H2zM3 6h3v3H3zM8 2h3v3H8zM14 8h3v3h-3zM14 13h3v3h-3z" fill="currentColor" stroke="none"/>',
            addnode: '<path d="M4 8.500h6M7 5v7M9 3l5 5.500-5 6M14 7h3v3h-3z"/>',
            pinq: pin + quest(14, 9), lineq: '<path d="M3 7l13 7"/>' + quest(14, 9), regionq: house + quest(14, 9),
            textq: letterA(2) + quest(14, 9),
            ows: win('<path d="M9 12l2-4 2 2 3-2"/><path d="M1.500 15.500l2-6h7l-2 6z" fill="#909000"/>'),
            oearth: '<circle cx="11" cy="8" r="6" fill="#4898c8"/><path d="M9 4l5 1 1 4-3 2z" fill="#d89830" stroke="none"/><path d="M2.500 15.500l2-6h8l-3 6z" fill="#909000"/><path d="M3 9l6-1v2l-5 3z" fill="#ffff60" stroke="none"/>',
            cat: '<path d="M3.500 4.500h14v10h-14z" fill="#fff"/><path d="M2 3h7v3H2zM5 7h6l-2 2 2 2M12 5h5v3h-5z" fill="#999"/><path d="M14 8v8M10 12h8" stroke="#f0e800" stroke-width="1.500"/>',
            graph3: '<path d="M2 15.500h13M3 12.500h13M5 9.500h13M7.500 6v8M13.500 3v7M11.500 4.500l2-2 2 2M5.500 7.500l2-2 2 2"/>',
            route: '<path d="M2 6h8v3H4v3h6v4M10 9h7V4h-4M12 12h6M2 9h2M2 12v3h5"/>',
            wsel: win('<path d="M4 8.500h12M4 10.500h12M4 12.500h12" stroke="#b0b0b0"/>') + '<path d="M9 7v8l2-2 1 3 2-1-1-3h2z" fill="#000" stroke="none"/>'
        }

        // "-" in front of a name marks a disabled tool
        const toolbars = {
            row1: ['file open openws|-save savews|wmap print|cut copy -paste|undo|browser mapper grapher layout redist help', 'run wrench|scale|globe pencil plus|-earth north'],
            row2: ['select marquee radius poly -bound none invert -graphsel|zoomin zoomout -zoomq hand|-info -hot -label -drag|-layers ruler|legend sum|-seth -dist|-clip -clip2',
                'pin line pline arc region ellipse rect rrect text frame|-reshape -addnode|pinq lineq regionq textq', 'ows oearth cat graph3 -route|wsel']
        }

        const toolButton = (name) => {
            const off = name[0] == '-'
            const id = name.replace('-', '')
            const on = id == 'select'
            return `<button title="${id}" ${off ? 'disabled' : ''} class="w-6 h-[22px] p-px border ${on ? 'border-[#716f64] border-r-white border-b-white bg-[repeating-conic-gradient(#fff_0_25%,#ece9d8_0_50%)] bg-[length:2px_2px]' : 'border-white border-r-black border-b-black shadow-[inset_-1px_-1px_#aca899]'} ${off ? 'text-[#aca899]' : 'text-black'}">
                <svg viewBox="0 0 20 18" class="w-5 h-[18px] overflow-visible ${off ? 'drop-shadow-[1px_1px_0_#fff]' : ''}" fill="none" stroke="currentColor">${icons[id]}</svg></button>`
        }
        for (const row in toolbars) {
            byId(row).innerHTML = toolbars[row].map((bar, i) =>
                `<div class="flex gap-[6px] h-7 items-center pl-[5px] pr-[6px] ${i ? 'border-l border-black' : ''}">` +
                bar.split('|').map(g => `<div class="flex">${g.split(' ').map(toolButton).join('')}</div>`).join('') + '</div>').join('')
        }

        document.querySelectorAll('[data-controls]').forEach(el => {
            const mid = el.dataset.controls == 'restore'
                ? '<path d="M8 5h6v6h-2" fill="none" stroke="#fff" stroke-width="2"/><path d="M5 9h6v5H5z" fill="none" stroke="#fff" stroke-width="2"/>'
                : '<path d="M4 4h11v11H4zM5 7v7h9V7z" fill="#fff" fill-rule="evenodd"/>'
            const blue = 'w-[21px] h-[21px] rounded-[3px] border border-[#c3d0f8] bg-[linear-gradient(135deg,#6f92f2,#4a74e6_40%,#3f78ea)]'
            el.innerHTML = `<button aria-label="Свернуть" class="${blue}"><svg class="w-[19px] h-[19px]"><path d="M4 12h7v3H4z" fill="#fff"/></svg></button>
                <button aria-label="Развернуть" class="${blue}"><svg class="w-[19px] h-[19px]">${mid}</svg></button>
                <button aria-label="Закрыть" class="w-[21px] h-[21px] rounded-[3px] border border-[#d8c0dc] bg-[linear-gradient(135deg,#c07f94,#b4647c_40%,#b06070)]"><svg class="w-[19px] h-[19px]"><path d="M5 5l9 9M14 5l-9 9" stroke="#fff" stroke-width="2"/></svg></button>`
        })

        const arrows = { up: 'M4 9h7l-3-4h-1z', down: 'M4 6h7l-3 4h-1z', left: 'M9 4v7l-4-3v-1z', right: 'M6 4v7l4-3v-1z', thumb: '' }
        document.querySelectorAll('[data-arrow]').forEach(el => {
            el.type = 'button'
            el.ariaLabel = el.dataset.arrow
            el.className = 'w-4 h-4 shrink-0 bg-[#ece9d8] border border-white border-r-[#716f64] border-b-[#716f64]'
            el.innerHTML = `<svg class="w-[14px] h-[14px]"><path d="${arrows[el.dataset.arrow]}" fill="${el.disabled ? '#aca899' : '#000'}"/></svg>`
        })

        // dialog drop-downs with a preview box and a separate arrow
        document.querySelectorAll('[data-combo]').forEach(el => {
            const { combo, value = '', off, look } = el.dataset
            const width = look == 'line' ? 'w-[120px]' : 'w-[132px]'
            const looks = {
                focus: 'm-[2px] border border-black outline outline-[#3068c0]',
                black: 'm-[3px] bg-black',
                line: 'mx-[5px] bg-[linear-gradient(#000,#000)] bg-[length:100%_1px] bg-no-repeat bg-center'
            }
            el.className = `flex shrink-0 ${width} h-[22px] border-2 border-r border-b border-[#716f64] border-l-black border-t-black border-r-white border-b-white bg-white`
            el.innerHTML = `<select id="${combo}" aria-label="${combo}" ${off ? 'disabled' : ''} class="appearance-none flex-1 min-w-0 text-center text-[11px] leading-none text-black opacity-100 ${looks[look] || ''}"><option>${value}</option></select>
                <svg class="w-[17px] h-[20px] shrink-0 border border-black border-l-black bg-[#ece9d8] shadow-[inset_1px_1px_#fff,inset_-1px_-1px_#aca899]"><path d="M7 4h2v4h3l-4 4-4-4h3zM4 12h8v1H4z" fill="${off ? '#aca899' : '#000'}"/></svg>`
        })

        const rows = [['Земельный участок', '1,98', '897', '0', 'сосна'], ['0', '0', '0', '0', ''], ['0', '0', '0', '0', ''], ['0', '0', '0', '0', ''], ['', '0', '0', '0', '']]
        byId('plots').innerHTML = rows.map((r, i) => `<tr class="h-[19px]">
            <td class="pl-[3px] leading-none"><input type="checkbox" aria-label="Строка ${i + 1}" class="appearance-none block w-[13px] h-[13px] border border-black"></td>` +
            r.map((c, n) => `<td class="border border-black px-1 ${n > 0 && n < 4 ? 'text-right' : ''}">${c}</td>`).join('') + '</tr>').join('')

        // map nodes
        let rings = ''
        for (let i = 1; i < 15; i++) rings += `<circle cx="${Math.round(77 + i * 14.8)}" cy="203.500" r="3.500"/>`
        for (let i = 0; i < 6; i++) rings += `<circle cx="${Math.round(77 + i * 14.8)}" cy="322.500" r="3.500"/>`
        for (let i = 1; i < 6; i++) rings += `<circle cx="${Math.round(77 + i * 14.8)}" cy="440.500" r="3.500"/>`
        byId('mapRings').innerHTML = rings + '<path d="M77 322.500h60"/>'

        let marks = ''
        for (let i = 1; i < 16; i++) {
            const x = Math.round(553 + i * 9.55) + .5
            if (i < 15) marks += `<path d="M${x - 1} 465.500h2v2h-2z"/>`
            marks += `<path d="M${x - 1} 618.500h2v2h-2z"/>`
        }
        byId('layoutMarks').innerHTML = marks

        // rulers, centimetres
        let ticks = '', nums = ''
        for (let i = 0; i < 57; i++) {
            const x = Math.floor(500.5 + i * 11.68) + .5
            ticks += `<path d="M${x} ${i % 10 ? 357 : 347}V367"/>`
            if (i % 10 == 0) nums += `<text x="${x + .5}" y="358">${i}</text>`
            const y = Math.floor(369.2 + i * 11.68) + .5
            if (i && y < 784) ticks += `<path d="M${i % 10 ? 488 : 474} ${y}H498"/>`
            if (i && i % 10 == 0 && y < 784) nums += `<text x="475" y="${y - 1.5}">${i}</text>`
        }
        byId('ruler').innerHTML = ticks
        byId('rulerText').innerHTML = nums
    </script>
</body>
</html>
